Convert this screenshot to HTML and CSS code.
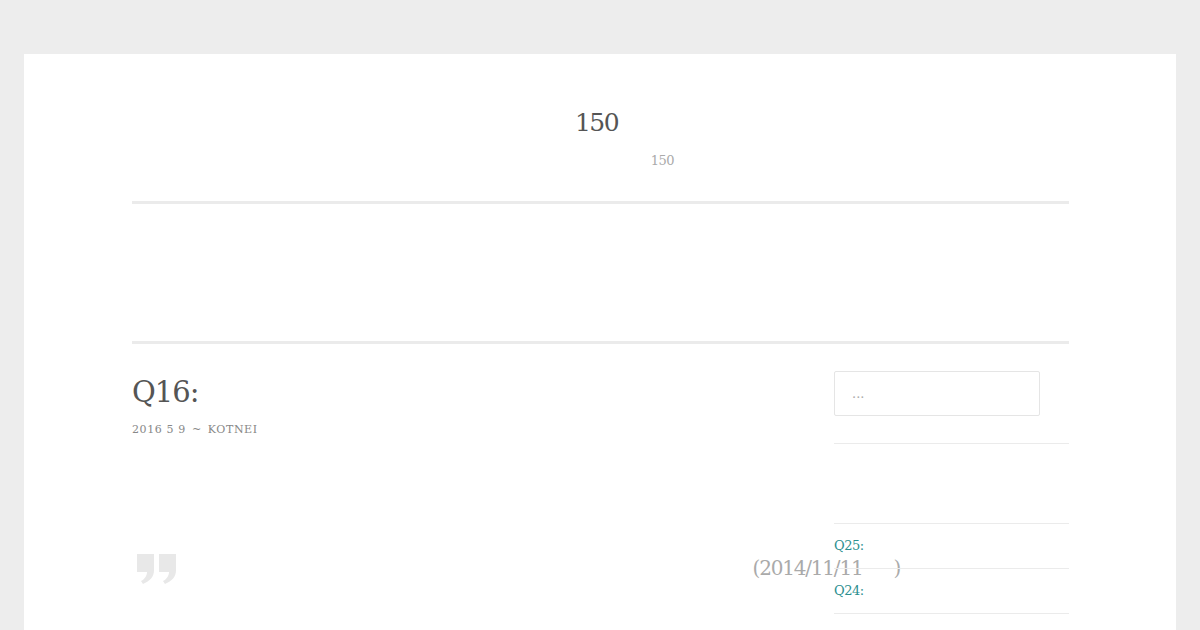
FILE: index.html
```html
<!DOCTYPE html>
<html lang="zh">
<head>
  <meta charset="UTF-8" />
  <meta name="viewport" content="width=device-width, initial-scale=1.0"/>
  <title>150</title>
  <link rel="stylesheet" href="styles.css">
</head>
<body>
  <div class="page">
    <header class="site-header">
      <h1 class="site-title">150</h1>
      <p class="site-desc">150</p>
    </header>
    <nav class="site-nav"></nav>

    <div class="content">
      <main class="main">
        <h2 class="entry-title">Q16:</h2>
        <div class="entry-meta">2016 5 9 <span class="sep">~</span> kotnei</div>
        <blockquote class="quote">
          <svg class="quote-mark" width="40" height="30" viewBox="0 0 40 30">
            <path d="M0 0 H17 V16 C17 23 13 27 6 30 L4 27 C8 25 10 21 10 18 H0 Z"/>
            <path d="M22 0 H39 V16 C39 23 35 27 28 30 L26 27 C30 25 32 21 32 18 H22 Z"/>
          </svg>
          <p class="quote-text">(2014/11/11&nbsp;&nbsp;&nbsp;&nbsp;&nbsp;&nbsp;)</p>
        </blockquote>
      </main>

      <aside class="sidebar">
        <div class="search">
          <input type="text" class="search-field" placeholder="...">
        </div>
        <div class="widget-gap"></div>
        <ul class="recent">
          <li><a href="#">Q25:</a></li>
          <li><a href="#">Q24:</a></li>
          <li><a href="#">Q23:</a></li>
        </ul>
      </aside>
    </div>
  </div>
</body>
</html>
```

FILE: styles.css
```css
body {
  margin: 0;
  padding: 54px 24px 0;
  background-color: #ededed;
  font-family: "DejaVu Serif", serif;
  color: #555;
}
.page {
  background-color: #fff;
  padding: 0 107px 0 108px;
  height: 620px;
}
.site-header {
  text-align: center;
  padding-top: 54px;
  border-bottom: 3px solid #ebebeb;
  height: 93px;
}
.site-title {
  margin: 0 8px 0 0;
  font-size: 25px;
  font-weight: normal;
  color: #555;
  letter-spacing: -1.5px;
}
.site-desc {
  margin: 16px 0 0;
  padding-left: 124px;
  font-size: 13px;
  color: #aaa;
  letter-spacing: -0.5px;
}
.site-nav {
  height: 137px;
  border-bottom: 3px solid #ebebeb;
}
.content {
  display: flex;
  gap: 30px;
}
.main {
  flex: 1;
  padding-top: 31px;
}
.entry-title {
  margin: 0;
  font-size: 29px;
  font-weight: normal;
  letter-spacing: -1px;
  color: #555;
}
.entry-meta {
  margin-top: 14px;
  font-size: 11px;
  color: #888;
  letter-spacing: 0.6px;
  text-transform: uppercase;
}
.entry-meta .sep {
  margin: 0 2px;
}
.quote {
  margin: 118px -96px 0 0;
  display: flex;
  align-items: flex-start;
}
.quote-mark {
  flex: none;
  margin: 0 0 0 5px;
  fill: #e8e8e8;
}
.quote-text {
  margin: 2px 0 0 auto;
  font-size: 20px;
  color: #aaa;
  letter-spacing: -1.2px;
}
.sidebar {
  width: 235px;
  padding-top: 27px;
}
.search {
  padding-bottom: 27px;
  border-bottom: 1px solid #ebebeb;
}
.search-field {
  display: block;
  box-sizing: border-box;
  width: 206px;
  height: 45px;
  border: 1px solid #e5e5e5;
  border-radius: 2px;
  padding: 0 17px;
  font-family: "DejaVu Serif", serif;
  font-size: 13px;
  color: #555;
}
.search-field::placeholder {
  color: #aaa;
}
.widget-gap {
  height: 79px;
}
.recent {
  list-style: none;
  margin: 0;
  padding: 0;
}
.recent li {
  border-top: 1px solid #ebebeb;
  padding: 13px 0 13px;
  font-size: 13px;
  line-height: 18px;
}
.recent a {
  color: #2b8f8f;
  text-decoration: none;
  letter-spacing: -0.5px;
}
```
